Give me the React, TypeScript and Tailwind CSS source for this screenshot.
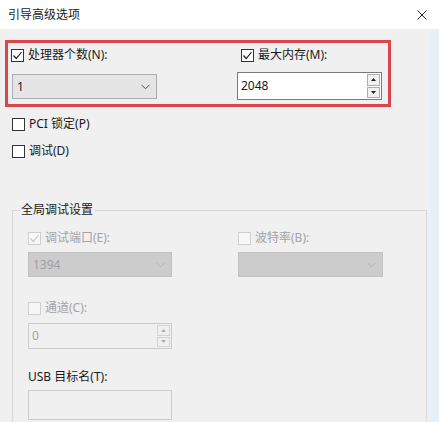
import React from 'react';

type CheckProps = { checked?: boolean; disabled?: boolean };

const CheckBox: React.FC<CheckProps> = ({ checked, disabled }) => (
    <span
        className={`flex h-[13px] w-[13px] shrink-0 items-center justify-center border ${
            disabled ? 'border-[#cfcfcf] bg-[#f7f7f7]' : 'border-[#333333] bg-white'
        }`}
    >
        {checked && (
            <svg width="11" height="11" viewBox="0 0 11 11">
                <polyline
                    points="1.5,5.5 4.3,8.5 9.5,2"
                    fill="none"
                    stroke={disabled ? '#c8c8c8' : '#222222'}
                    strokeWidth="1.2"
                />
            </svg>
        )}
    </span>
);

const CheckRow: React.FC<CheckProps & { label: string }> = ({ label, checked, disabled }) => (
    <div className={`flex h-[14px] items-center gap-[4px] ${disabled ? 'text-[#a3a3a3]' : 'text-[#1a1a1a]'}`}>
        <CheckBox checked={checked} disabled={disabled} />
        <span className="leading-[14px]">{label}</span>
    </div>
);

const Chevron = ({ color }: { color: string }) => (
    <svg width="9" height="6" viewBox="0 0 9 6">
        <polyline points="0.5,0.8 4.5,4.8 8.5,0.8" fill="none" stroke={color} strokeWidth="1" />
    </svg>
);

const Select: React.FC<{ value?: string; disabled?: boolean; className: string }> = ({ value, disabled, className }) => (
    <div
        className={`flex items-center justify-between border pl-[4px] pr-[6px] ${
            disabled ? 'border-[#c2c2c2] bg-[#cccccc] text-[#a0a0a0]' : 'border-[#adadad] bg-[#e5e5e5] text-[#1a1a1a]'
        } ${className}`}
    >
        <span>{value}</span>
        <Chevron color={disabled ? '#b4b4b4' : '#555555'} />
    </div>
);

const Arrow = ({ up, color }: { up?: boolean; color: string }) => (
    <svg width="5" height="3" viewBox="0 0 5 3">
        <polygon points={up ? '0,3 2.5,0 5,3' : '0,0 2.5,3 5,0'} fill={color} />
    </svg>
);

const Spin: React.FC<{ value?: string; disabled?: boolean; className: string }> = ({ value, disabled, className }) => {
    const btn = disabled ? 'border-[#d4d4d4] bg-[#f0f0f0]' : 'border-[#adadad] bg-[#f0f0f0]';
    const arrow = disabled ? '#b0b0b0' : '#222222';
    return (
        <div
            className={`flex border ${
                disabled ? 'border-[#cccccc] bg-[#f0f0f0] text-[#a0a0a0]' : 'border-[#7a7a7a] bg-white text-[#1a1a1a]'
            } ${className}`}
        >
            <span className="flex-1 self-center pl-[3px]">{value}</span>
            <div className="flex w-[14px] flex-col gap-[1px] py-[1px] pr-[1px]">
                <div className={`flex flex-1 items-center justify-center border ${btn}`}>
                    <Arrow up color={arrow} />
                </div>
                <div className={`flex flex-1 items-center justify-center border ${btn}`}>
                    <Arrow color={arrow} />
                </div>
            </div>
        </div>
    );
};

export default function App() {
    return (
        <div className="h-[422px] w-[439px] overflow-hidden bg-[#f0f0f0] font-['Noto_Sans','Noto_Sans_CJK_SC',sans-serif] text-[12px] text-[#1a1a1a]">
            <div className="flex h-[29px] items-center justify-between bg-white pl-[8px] pr-[12px]">
                <span className="text-[12px]">引导高级选项</span>
                <svg width="10" height="10" viewBox="0 0 10 10">
                    <path d="M0.5 0.5 L9.5 9.5 M9.5 0.5 L0.5 9.5" stroke="#222222" strokeWidth="1" />
                </svg>
            </div>

            <div className="flex h-[393px]">
                <div className="w-[430px]">
                    {/* highlighted row */}
                    <div className="ml-[5px] mt-[11px] flex h-[67px] w-[386px] border-[3px] border-[#d9474c]">
                        <div className="w-[229px] pl-[3px] pt-[5px]">
                            <CheckRow checked label="处理器个数(N):" />
                            <Select value="1" className="ml-[1px] mt-[12px] h-[25px] w-[145px]" />
                        </div>
                        <div className="pt-[5px]">
                            <div className="pl-[4px]">
                                <CheckRow checked label="最大内存(M):" />
                            </div>
                            <Spin value="2048" className="mt-[10px] h-[28px] w-[145px]" />
                        </div>
                    </div>

                    <div className="ml-[12px] mt-[10px]">
                        <CheckRow label="PCI 锁定(P)" />
                    </div>
                    <div className="ml-[12px] mt-[13px]">
                        <CheckRow label="调试(D)" />
                    </div>

                    <fieldset className="ml-[12px] mt-[44px] h-[240px] w-[415px] border border-[#d6d6d6] pl-[15px]">
                        <legend className="ml-[-8px] px-[1px] leading-[16px]">全局调试设置</legend>
                        <div className="mt-[13px] flex">
                            <div className="w-[210px]">
                                <CheckRow checked disabled label="调试端口(E):" />
                                <Select disabled value="1394" className="mt-[7px] h-[25px] w-[144px]" />
                            </div>
                            <div>
                                <CheckRow disabled label="波特率(B):" />
                                <Select disabled className="mt-[7px] h-[25px] w-[145px]" />
                            </div>
                        </div>

                        <div className="mt-[24px]">
                            <CheckRow disabled label="通道(C):" />
                        </div>
                        <Spin disabled value="0" className="mt-[8px] h-[26px] w-[144px]" />

                        <div className="mt-[20px] leading-[16px]">USB 目标名(T):</div>
                        <div className="mt-[5px] h-[30px] w-[144px] border border-[#cccccc] bg-[#f0f0f0]" />
                    </fieldset>
                </div>
                <div className="w-[9px] bg-[#e8f0f7]" />
            </div>
        </div>
    );
}
